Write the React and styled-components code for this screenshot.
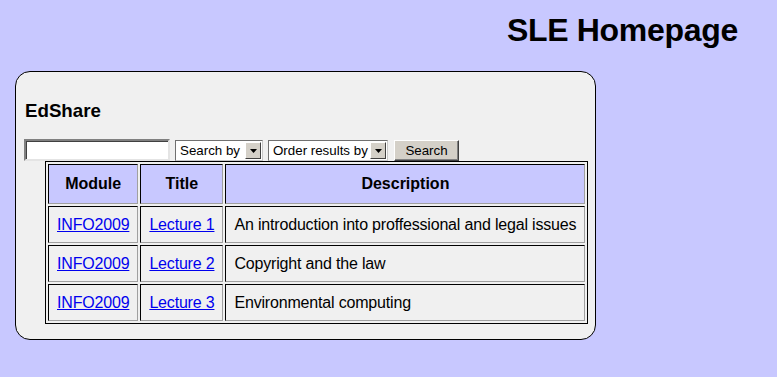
import styled, { createGlobalStyle } from "styled-components";

const GlobalStyle = createGlobalStyle`
    html, body {
        margin: 0;
        padding: 0;
        background-color: #c8c8ff;
        font-family: "Liberation Sans", Arial, sans-serif;
        font-size: 16px;
        color: #000;
    }
`
const Pagina = styled.div`
    padding: 12px 39px 0 15px;
`
const Titulo = styled.h1`
    margin: 0 0 22px 0;
    font-size: 32px;
    font-weight: bold;
    text-align: right;
    line-height: 37px;
    letter-spacing: -0.3px;
`
const Painel = styled.div`
    box-sizing: border-box;
    width: 581px;
    background-color: #f0f0f0;
    border: 1px solid #000;
    border-radius: 15px;
    padding: 9px 0 15px 8px;
`
const Subtitulo = styled.h3`
    margin: 19px 0 18px 1px;
    font-size: 18.72px;
    font-weight: bold;
    line-height: 21px;
`
const Barra = styled.form`
    display: flex;
    align-items: stretch;
    gap: 5px;
    height: 22px;
`
const Campo = styled.input`
    box-sizing: border-box;
    width: 146px;
    height: 22px;
    margin: 0;
    padding: 1px 3px;
    background: #fff;
    border: 2px solid;
    border-color: #808080 #e4e4e4 #e4e4e4 #808080;
    box-shadow: inset 1px 1px 0 #404040;
    font: 13.33px "Liberation Sans", Arial, sans-serif;
    outline: none;
`
const CaixaSelect = styled.label`
    box-sizing: border-box;
    display: flex;
    align-items: center;
    width: ${(p) => p.largura}px;
    height: 21px;
    margin-top: 1px;
    background: #fff;
    border: 1px solid;
    border-color: #707070 #c8c8c8 #c8c8c8 #707070;
    padding-right: 1px;
`
const Select = styled.select`
    flex: 1;
    min-width: 0;
    appearance: none;
    border: none;
    background: transparent;
    padding: 0 0 0 4px;
    margin: 0;
    font: 13.33px "Liberation Sans", Arial, sans-serif;
    color: #000;
    outline: none;
`
const Seta = styled.span`
    box-sizing: border-box;
    display: flex;
    align-items: center;
    justify-content: center;
    width: 16px;
    height: 17px;
    background: #d4d0c8;
    border: 1px solid;
    border-color: #fff #404040 #404040 #fff;
`
const Botao = styled.button`
    box-sizing: border-box;
    width: 65px;
    height: 21px;
    margin: 1px 0 0 1px;
    padding: 0;
    background: #d4d0c8;
    border: 1px solid;
    border-color: #fff #404040 #404040 #fff;
    box-shadow: inset -1px -1px 0 #808080;
    font: 13.33px "Liberation Sans", Arial, sans-serif;
    color: #000;
`
const Tabela = styled.table`
    margin-left: 21px;
    border: 1px solid #000;
    border-spacing: 2px;
    padding: 0;
`
const Cabecalho = styled.th`
    background-color: #c8c8ff;
    font-weight: bold;
    padding: 10px 8px;
    border: 1px solid;
    border-color: #000 #a0a0a0 #a0a0a0 #000;
    line-height: 18px;
    white-space: nowrap;
`
const Celula = styled.td`
    padding: 9px 8px 8px 8px;
    border: 1px solid;
    border-color: #000 #a0a0a0 #a0a0a0 #000;
    line-height: 18px;
    white-space: nowrap;
    text-align: ${(p) => (p.centro ? "center" : "left")};
    letter-spacing: -0.18px;
`
const Link = styled.a`
    color: #0000ee;
    text-decoration: underline;
`

const aulas = [
    { modulo: "INFO2009", titulo: "Lecture 1", descricao: "An introduction into proffessional and legal issues" },
    { modulo: "INFO2009", titulo: "Lecture 2", descricao: "Copyright and the law" },
    { modulo: "INFO2009", titulo: "Lecture 3", descricao: "Environmental computing" },
]

const SetaIcone = () => (
    <svg width="7" height="4" viewBox="0 0 7 4">
        <path d="M0 0 H7 L3.5 4 Z" fill="#000" />
    </svg>
)

const App = () => {
    return (
        <Pagina>
            <GlobalStyle />
            <Titulo>SLE Homepage</Titulo>
            <Painel>
                <Subtitulo>EdShare</Subtitulo>
                <Barra onSubmit={(e) => e.preventDefault()}>
                    <Campo type="text" />
                    <CaixaSelect largura={88}>
                        <Select defaultValue="">
                            <option value="">Search by</option>
                        </Select>
                        <Seta><SetaIcone /></Seta>
                    </CaixaSelect>
                    <CaixaSelect largura={120}>
                        <Select defaultValue="">
                            <option value="">Order results by</option>
                        </Select>
                        <Seta><SetaIcone /></Seta>
                    </CaixaSelect>
                    <Botao type="submit">Search</Botao>
                </Barra>
                <Tabela>
                    <thead>
                        <tr>
                            <Cabecalho>Module</Cabecalho>
                            <Cabecalho>Title</Cabecalho>
                            <Cabecalho>Description</Cabecalho>
                        </tr>
                    </thead>
                    <tbody>
                        {aulas.map((a) => (
                            <tr key={a.titulo}>
                                <Celula centro><Link href="#">{a.modulo}</Link></Celula>
                                <Celula centro><Link href="#">{a.titulo}</Link></Celula>
                                <Celula>{a.descricao}</Celula>
                            </tr>
                        ))}
                    </tbody>
                </Tabela>
            </Painel>
        </Pagina>
    )
}

export default App;
